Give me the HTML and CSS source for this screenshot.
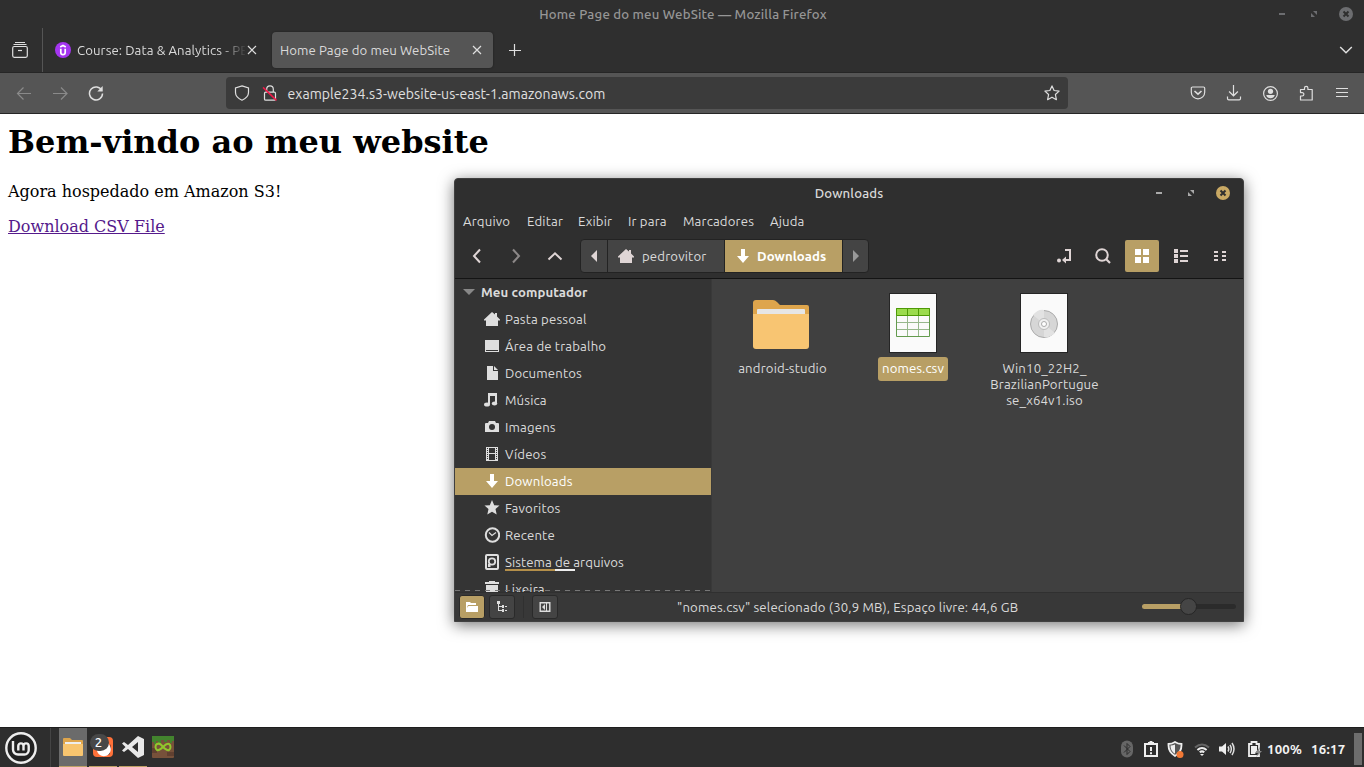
FILE: index.html
```html
<!DOCTYPE html>
<html lang="pt-BR">
<head>
<meta charset="utf-8">
<title>Home Page do meu WebSite — Mozilla Firefox</title>
<link rel="stylesheet" href="styles.css">
</head>
<body>
<header class="browser">
  <div class="titlebar">
    <span class="titlebar-text">Home Page do meu WebSite — Mozilla Firefox</span>
    <div class="window-controls">
      <svg width="16" height="16"><path d="M5 7h6v2H5z"/></svg>
      <svg width="16" height="16"><path d="M7 5h4v4zM5 7v4h4z"/></svg>
      <svg width="16" height="16"><circle cx="8" cy="8" r="7"/><path class="cross" d="M5.5 5.5l5 5m0-5l-5 5"/></svg>
    </div>
  </div>
  <div class="tabs">
    <div class="firefox-view">
      <svg class="line" width="18" height="18"><path d="M4 1.500h10M2.500 3.500h13"/><rect x="1.700" y="5.500" width="14.600" height="10.800" rx="1.500"/><path d="M7 9.500h4"/></svg>
    </div>
    <div class="tab first-tab">
      <svg width="16" height="16"><circle cx="8" cy="8" r="8" fill="#a435f0"/><path d="M5.800 6.800v3.600a2.200 2.200 0 0 0 4.400 0V6.800M5.200 5L8 3.500 10.800 5" fill="none" stroke="#fff" stroke-width="1.700"/></svg>
      <span class="tab-label fade">Course: Data &amp; Analytics - PE</span>
      <svg class="line" width="10" height="10"><path d="M1 1l8 8m0-8L1 9"/></svg>
    </div>
    <div class="tab active">
      <span class="tab-label">Home Page do meu WebSite</span>
      <svg class="line" width="10" height="10"><path d="M1 1l8 8m0-8L1 9"/></svg>
    </div>
    <svg class="line new-tab" width="12" height="12"><path d="M5.500 0v12M0 6.500h12"/></svg>
    <svg class="line all-tabs" width="14" height="9"><path d="M1.200 1L7 6.700 12.800 1"/></svg>
  </div>
  <div class="toolbar">
    <svg class="line dim back" width="16" height="14"><path d="M15 7.500H1.500M7.500 1.500l-6 6 6 6"/></svg>
    <svg class="line dim forward" width="16" height="14"><path d="M0 7.500h14M8 1.500l6 6-6 6"/></svg>
    <svg class="line reload" width="16" height="16"><path d="M13.800 5.500A6.500 6.500 0 1 0 14.500 8.500"/><path d="M14.700 1v5.400H9.300z" fill="#dfdfdf" stroke="none"/></svg>
    <div class="urlbar">
      <svg class="line" width="16" height="16"><path d="M8 .900L14.500 3v4.500c0 3-2.200 5.700-6.500 7.700-4.300-2-6.500-4.700-6.500-7.700V3z"/></svg>
      <svg class="line lock" width="16" height="16"><rect x="2.500" y="7.200" width="11" height="8" rx="1.300"/><path d="M4.700 7V4.200a3.300 3.300 0 0 1 6.600 0V7"/><path d="M1 2.400l13.500 13" stroke="#f01848" stroke-width="1.500"/></svg>
      <span class="url">example234.s3-website-us-east-1.amazonaws.com</span>
      <svg class="line star" width="16" height="16"><path d="M8 .900l2.100 4.600 5 .600-3.700 3.400 1 5.200L8 12.200l-4.400 2.500 1-5.200L.900 6.100l5-.600z" stroke-linejoin="round"/></svg>
    </div>
    <div class="tools">
      <svg class="line" width="16" height="16"><path d="M2.500 2h11q1.200 0 1.200 1.200v4a6.700 6.700 0 0 1-13.400 0v-4Q1.300 2 2.500 2z"/><path d="M4.500 6L8 9.200 11.500 6" stroke-width="1.600"/></svg>
      <svg class="line" width="16" height="16"><path d="M7.500 0v11M3.100 6.500l4.400 4.300 4.400-4.300M1.500 11.500v2q0 1.300 1.300 1.300h10.400q1.300 0 1.300-1.300v-2"/></svg>
      <svg class="line" width="16" height="16"><circle cx="8.500" cy="8.500" r="6.900"/><circle cx="8.500" cy="6.300" r="2.600" fill="#dfdfdf" stroke="none"/><path d="M4.200 10h8.600q-1 3.300-4.300 3.300T4.200 10z" fill="#dfdfdf" stroke="none"/></svg>
      <svg class="line" width="16" height="16"><path d="M2.500 15V11h1.700a1.600 1.600 0 0 0 0-3.400H2.500V4.500h4V3a1.700 1.700 0 0 1 3.400 0v1.500h4.300V15z" stroke-linejoin="round"/></svg>
      <svg class="line" width="16" height="16"><path d="M2 3.500h12M2 7.500h12M2 11.500h12"/></svg>
    </div>
  </div>
</header>

<main class="page">
  <h1>Bem-vindo ao meu website</h1>
  <p>Agora hospedado em Amazon S3!</p>
  <a href="#">Download CSV File</a>
</main>

<footer class="taskbar">
  <svg class="mint" width="34" height="34" viewBox="0 0 34 34"><circle cx="17" cy="17" r="14.700" fill="#222" stroke="#eee" stroke-width="2.400"/><path d="M9 10v8.500a5 5 0 0 0 5 5h6.500a4.200 4.200 0 0 0 4.200-4.200V15a2.600 2.600 0 0 0-5.200 0v4.600V15a2.600 2.600 0 0 0-5.200 0v4.600" fill="none" stroke="#eee" stroke-width="2.400"/></svg>
  <div class="task-list">
    <div class="task focused">
      <svg width="22" height="22"><path d="M1 3q0-1 1-1h6l2 2h10q1 0 1 1v3H1z" fill="#dea54c"/><path d="M3 6h16v4H3z" fill="#eee"/><path d="M1 8h20v11q0 1-1 1H2q-1 0-1-1z" fill="#f8c56f"/></svg>
    </div>
    <div class="task running">
      <svg width="22" height="22"><rect x="1" y="1" width="20" height="20" rx="4" fill="#ff7139"/><path d="M7 14a6 6 0 0 0 11-6v10a7 7 0 0 1-11-4z" fill="#522"/><path d="M7 12q5 3 8-5a7 7 0 1 1-10 8z" fill="#fff"/></svg>
      <span class="badge">2</span>
    </div>
    <div class="task running">
      <svg width="24" height="24"><path d="M17 1l6 3v16l-6 3L7 14l-4 3-2-1.500L4.500 12 1 8.500 3 7l4 3zM17 7l-6 5 6 5z" fill="#e8e8e8" fill-rule="evenodd"/></svg>
    </div>
    <div class="task">
      <svg width="22" height="22"><rect width="22" height="22" rx="1" fill="#77513a"/><path d="M0 12h5v5H0zM15 16h7v4h-7z" fill="#614030"/><path d="M0 0h22v5h-2v2h-2V4h-3v2h-3V4H9v3H6V5H4v3H2V6H0z" fill="#43842e"/><path d="M11 11c-2-3-4-4-6-3s-2 5 0 6 4-1 6-3 4-4 6-3 2 5 0 6-4-1-6-3z" fill="none" stroke="#91c72d" stroke-width="2"/></svg>
    </div>
  </div>
  <div class="tray">
    <svg width="12" height="18"><rect width="12" height="17" y=".5" rx="6" fill="#666"/><path d="M3 5.500l6 6-3 3v-11l3 3-6 6" fill="none" stroke="#2d2d2d"/></svg>
    <svg class="tray-notes" width="14" height="16"><path d="M1 3h12v12H1z" fill="none" stroke="#eee" stroke-width="2"/><path d="M4 1h1.500a1.500 1.500 0 0 1 3 0H10v3H4zM6 6h2v4H6zM6 11.200h2v2H6z" fill="#eee"/></svg>
    <svg class="tray-shield" width="17" height="17"><path d="M8 1q3 2 6.500 2 .5 8-6.500 12Q1 11 1.500 3 5 3 8 1z" fill="#555" stroke="#eee" stroke-width="1.800"/><path d="M8 3.500v9.300Q3.300 10 3.500 4.500 6 4.300 8 3.500z" fill="#eee"/><circle cx="13" cy="13.500" r="3.500" fill="#f27835"/></svg>
    <svg class="tray-wifi" width="16" height="13"><path d="M1 4.500q7-6 14 0" fill="none" stroke="#666" stroke-width="2"/><path d="M3.400 7q4.600-4 9.200 0M5.700 9.300Q8 7.500 10.300 9.300" fill="none" stroke="#eee" stroke-width="2"/><path d="M6 11h4l-2 2z" fill="#eee"/></svg>
    <svg class="tray-sound" width="16" height="14"><path d="M0 4.500h3L7 1v12L3 9.500H0z" fill="#eee"/><path d="M9 4.500q1.500 2.500 0 5M11 2.800q2.700 4.200 0 8.400M13 1q4 6 0 12" fill="none" stroke="#ddd" stroke-width="1.500"/></svg>
    <svg class="tray-battery" width="15" height="16"><path d="M1 3h2.500V1h5v2H11v12H1z" fill="none" stroke="#eee" stroke-width="1.800"/><path d="M3 5h6v5l-2 3H3z" fill="#eee"/><path d="M12 6l-5 6h3l-2 4 6-6h-3z" fill="#888"/></svg>
    <span class="percent">100%</span>
    <span class="clock">16:17</span>
    <i class="show-desktop"></i>
  </div>
</footer>

<section class="files">
  <div class="files-title">
    <span>Downloads</span>
    <div class="window-controls gold">
      <svg width="16" height="16"><path d="M5 7h6v2H5z"/></svg>
      <svg width="16" height="16"><path d="M7 5h4v4zM5 7v4h4z"/></svg>
      <svg width="16" height="16"><circle cx="8" cy="8" r="7"/><path class="cross" d="M5.500 5.500l5 5m0-5l-5 5"/></svg>
    </div>
  </div>
  <nav class="menu">
    <span class="m1">Arquivo</span><span class="m2">Editar</span><span class="m3">Exibir</span><span class="m4">Ir para</span><span class="m5">Marcadores</span><span class="m6">Ajuda</span>
  </nav>
  <div class="files-toolbar">
    <div class="nav-arrows">
      <svg width="16" height="16"><path d="M11 1.500L5 8l6 6.500"/></svg>
      <svg class="off" width="16" height="16"><path d="M5 1.500L11 8l-6 6.500"/></svg>
      <svg width="16" height="16"><path d="M1.500 11.500L8 5.300 14.500 11.500"/></svg>
    </div>
    <div class="path">
      <span class="seg edge"><svg width="8" height="12"><path d="M7 0v12L1 6z"/></svg></span>
      <span class="seg home"><svg width="16" height="15"><path d="M8 0l3 2.600V1h2v3.400L16 7.500v1h-2V14H2V8.500H0v-1z"/></svg>pedrovitor</span>
      <span class="seg current"><svg width="12" height="14"><path d="M4 0h4v7h4l-6 7-6-7h4z"/></svg>Downloads</span>
      <span class="seg edge last"><svg width="8" height="12"><path d="M1 0v12l6-6z"/></svg></span>
    </div>
    <div class="view-tools">
      <svg width="16" height="16"><path d="M9 2h5v10H8" fill="none" stroke="#dfd5d5" stroke-width="2"/><path d="M6 12l4-3.500v7z"/><circle cx="3" cy="12.500" r="2"/></svg>
      <svg width="16" height="16"><circle cx="7" cy="7" r="5.800" fill="none" stroke="#dfd5d5" stroke-width="2"/><path d="M11 11l4 4" stroke="#dfd5d5" stroke-width="2.200"/></svg>
      <span class="view-active"><svg width="14" height="14"><path d="M0 0h6v6H0zM8 0h6v6H8zM0 8h6v6H0zM8 8h6v6H8z"/></svg></span>
      <svg width="16" height="16"><path d="M1 1h4v4H1zM1 6h4v4H1zM1 11h4v4H1zM7 2h8v2H7zM7 7h8v2H7zM7 12h8v2H7z"/></svg>
      <svg width="16" height="16"><path d="M2 3h4v2H2zM2 7h4v2H2zM2 11h4v2H2zM10 3h4v2h-4zM10 7h4v2h-4zM10 11h4v2h-4z"/></svg>
    </div>
  </div>
  <div class="files-body">
    <aside class="places">
      <div class="place heading"><svg width="12" height="6"><path d="M0 0h12L6 6z"/></svg><b>Meu computador</b></div>
      <div class="place"><svg width="16" height="16"><path d="M8 1l3 2.600V2h2v3.400L16 8.500v1h-2V15H2V9.500H0v-1z"/></svg>Pasta pessoal</div>
      <div class="place"><svg width="16" height="16"><path d="M1 2h14v10H1zM1 13h14v1H1zM1 12h1v1H1zM14 12h1v1h-1z"/></svg>Área de trabalho</div>
      <div class="place"><svg width="16" height="16"><path d="M3 1h6v5h5v9H3zM10 1l4 4h-4z"/></svg>Documentos</div>
      <div class="place"><svg width="16" height="16"><path d="M4 1h9v10h-2V4H6v8H4z"/><ellipse cx="3" cy="12.500" rx="3" ry="2"/><ellipse cx="10.500" cy="11.500" rx="2.700" ry="2"/></svg>Música</div>
      <div class="place"><svg width="16" height="16"><path d="M2 4h2l1-2h6l1 2h2q1 0 1 1v8H1V5q0-1 1-1z"/><circle cx="8" cy="8" r="3" fill="#343434"/></svg>Imagens</div>
      <div class="place"><svg width="16" height="16"><path d="M2 1h12v14H2zM5 2v5h6V2zM5 8v6h6V8zM3 2v1h1V2zM3 4v1h1V4zM3 6v1h1V6zM3 8v1h1V8zM3 10v1h1v-1zM3 12v1h1v-1zM12 2v1h1V2zM12 4v1h1V4zM12 6v1h1V6zM12 8v1h1V8zM12 10v1h1v-1zM12 12v1h1v-1z" fill-rule="evenodd"/></svg>Vídeos</div>
      <div class="place selected"><svg width="16" height="16"><path d="M6 1h4v7h4l-6 7-6-7h4z"/></svg>Downloads</div>
      <div class="place"><svg width="16" height="16"><path d="M8 0l2.200 5.200 5.300.400-4 3.500 1.200 5.400L8 11.800l-4.700 2.700 1.200-5.400-4-3.500 5.300-.400z"/></svg>Favoritos</div>
      <div class="place"><svg width="16" height="16"><circle cx="8.500" cy="8" r="6.700" fill="none" stroke="#dedede" stroke-width="2"/><path d="M5 5.500L8 8.500l4-3" fill="none" stroke="#dedede" stroke-width="1.200"/></svg>Recente</div>
      <div class="place"><svg width="16" height="16"><rect x="2" y="1" width="12" height="14" rx="1" fill="none" stroke="#dedede" stroke-width="2"/><circle cx="8" cy="7.500" r="3.200" fill="none" stroke="#dedede" stroke-width="1.800"/><path d="M4 10h2.500v3H4z"/></svg><span class="disk">Sistema de arquivos</span></div>
      <div class="place"><svg width="16" height="16"><path d="M5 0h6v1h4v2H1V1h4zM2 4h12v11H2z"/></svg>Lixeira</div>
    </aside>
    <div class="grid">
      <div class="item"><div class="thumb"><svg width="58" height="52"><path d="M1 4q0-3 3-3h17q2 0 4 2l3 3h27q2 0 2 2v12H1z" fill="#dea54c"/><path d="M5 11q0-1 1-1h46q1 0 1 1v6H5z" fill="#e6e6e6"/><path d="M1 15h56v32q0 3-3 3H4q-3 0-3-3z" fill="#f8c572"/></svg></div><span>android-studio</span></div>
      <div class="item chosen"><div class="thumb"><svg width="48" height="60"><rect x=".5" y=".5" width="47" height="59" fill="#fafafa" stroke="#252525"/><path d="M7 15h34v8H7z" fill="#9bdb4d"/><path d="M18.500 23v20M29.500 23v20M7 29.500h34M7 36.500h34" stroke="#96b78c" fill="none"/><path d="M7.500 15.500h33v28h-33z" stroke="#639b4d" fill="none"/><path d="M7.500 15.500h33v7h-33zM18.500 15v7M29.500 15v7" stroke="#4e9a06" fill="none"/></svg></div><span>nomes.csv</span></div>
      <div class="item"><div class="thumb"><svg width="48" height="60"><rect x=".5" y=".5" width="47" height="59" fill="#fafafa" stroke="#252525"/><circle cx="24" cy="31" r="13.500" fill="#d6d6d6" stroke="#aaa"/><path d="M24 31L13 22q5-6 11-5zM24 31l11 9q-5 5-11 4z" fill="#e2e2e2"/><circle cx="24" cy="31" r="5.500" fill="#f0f0f0" stroke="#bbb"/><circle cx="24" cy="31" r="2.500" fill="#fff" stroke="#aaa"/></svg></div><span>Win10_22H2_<br>BrazilianPortugue<br>se_x64v1.iso</span></div>
    </div>
  </div>
  <div class="status">
    <span class="sb on"><svg width="14" height="12"><path d="M1 1h4l1 1h5v2H3L1 9zM3.500 5H13v6H1V8z"/></svg></span>
    <span class="sb"><svg width="12" height="12"><path d="M1 0h3v3H3v2h3v1H3v3h3v1H2V3H1zM6 4h2v3H6zM9 5h2v1H9zM6 8h2v3H6zM9 9h2v1H9z"/></svg></span>
    <i class="divider"></i>
    <span class="sb"><svg width="12" height="12"><path d="M1.200 1.700h9.600v8.600H1.200z" fill="none" stroke="#dedede" stroke-width="1.400"/><path d="M6 3v6L3 6zM7 2h1v8H7z"/></svg></span>
    <span class="status-text">"nomes.csv" selecionado (30,9 MB), Espaço livre: 44,6 GB</span>
    <div class="slider"><i class="track"></i><i class="knob"></i></div>
  </div>
</section>
</body>
</html>
```
FILE: styles.css
```css
* { box-sizing: border-box; }
body {
  margin: 0; width: 1364px; height: 767px; overflow: hidden; position: relative;
  display: flex; flex-direction: column; background: #fff; color: #dadada;
  font: 13.2px/16px Ubuntu, "Noto Sans", sans-serif;
}
svg { display: block; flex: none; }
span { white-space: nowrap; }
.line { fill: none; stroke: #dfdfdf; stroke-width: 1.2; }
.dim { stroke: #8a8a8a; }

.browser { flex: none; letter-spacing: .08px; }
.titlebar { height: 28px; background: #2f2f2f; position: relative; display: flex; align-items: center; justify-content: center; padding-left: 2px; }
.titlebar-text { color: #969696; font-weight: 500; letter-spacing: .2px; }
.window-controls { position: absolute; right: 10px; top: 6px; display: flex; gap: 16px; fill: #6c6d70; }
.window-controls .cross { stroke: #2f2f2f; stroke-width: 2; }
.tabs { height: 45px; background: #2f2f2f; border-bottom: 1px solid #262626; display: flex; align-items: center; }
.firefox-view { width: 43px; height: 44px; border-right: 1px solid #555; padding: 13px 0 0 11px; }
.tab { height: 36px; display: flex; align-items: center; border-radius: 4px; }
.first-tab { width: 229px; padding-left: 12px; }
.first-tab .tab-label { width: 168px; margin: 0 2px 0 6px; overflow: hidden; }
.fade { -webkit-mask-image: linear-gradient(to right, #000 142px, transparent 170px); mask-image: linear-gradient(to right, #000 142px, transparent 170px); }
.active { width: 221px; background: #555; padding: 0 11px 0 8px; justify-content: space-between; box-shadow: 0 0 2px #1c1c1c; }
.new-tab { margin-left: 16px; }
.all-tabs { margin: 0 11px 0 auto; stroke-width: 1.5; }
.toolbar { height: 41px; background: #555; border-bottom: 1px solid #262626; display: flex; align-items: center; padding-left: 16px; }
.forward { margin-left: 21px; }
.reload { margin-left: 19px; stroke-width: 1.5; }
.urlbar { width: 842px; height: 32px; margin-left: 122px; border-radius: 4px; background: #3b3b3b; display: flex; align-items: center; padding: 0 8px; }
.lock { margin-left: 12px; }
.url { margin-left: 9.5px; padding-top: 1px; font-size: 14px; letter-spacing: .06px; color: #e0e0e0; }
.star { margin-left: auto; }
.tools { display: flex; gap: 20px; margin-left: 122px; }

.page { flex: 1; padding: 10px 8px 0; color: #000; font: 16px/19px "DejaVu Serif", serif; }
.page h1 { margin: 0 0 21px; font-size: 32px; line-height: 37px; font-weight: bold; }
.page p { margin: 0 0 16px; }
.page a { color: #551a8b; }

.taskbar { flex: none; height: 40px; background: #2e2e2e; border-top: 1px solid #1e1e1e; display: flex; }
.mint { margin: 3px 12px 0 4px; }
.task-list { display: flex; gap: 2px; border-left: 1px solid #444; padding-left: 8px; }
.task { width: 28px; height: 39px; display: flex; align-items: center; justify-content: center; position: relative; padding-bottom: 1px; }
.focused { background: #6b6b6b; border-bottom: 1px solid #bda165; }
.running { border-bottom: 1px solid #bda165; }
.badge { position: absolute; left: 1px; top: 6px; width: 19px; height: 17px; border-radius: 9px; background: #484848; color: #fff; text-align: center; font-weight: 500; padding-right: 2px; }
.tray { margin-left: auto; display: flex; align-items: center; font-weight: bold; color: #f2f2f2; padding: 3px 2px 0 0; }
.tray-notes { margin-left: 11px; }
.tray-shield { margin-left: 9px; }
.tray-wifi { margin-left: 10px; }
.tray-sound { margin-left: 9px; }
.tray-battery { margin-left: 13px; }
.percent { width: 37px; margin-left: 4px; letter-spacing: .2px; }
.clock { width: 36px; margin-left: 7px; letter-spacing: .3px; }
.show-desktop { width: 8px; height: 32px; margin-left: 7px; background: #6d6d6d; }

.files { position: absolute; left: 454px; top: 178px; width: 790px; height: 444px; border: 1px solid #404040; border-radius: 4px 4px 0 0; background: #2f2f2f; box-shadow: 0 3px 15px rgba(0,0,0,.55); display: flex; flex-direction: column; letter-spacing: .15px; }
.files-title { height: 29px; display: flex; align-items: center; justify-content: center; position: relative; font-weight: 500; padding-bottom: 2px; }
.gold { right: 12px; fill: #aaa; }
.gold circle { fill: #c9a964; }
.menu { height: 27px; padding: 0 0 2px 8px; display: flex; align-items: center; }
.m1 { width: 64px; } .m2 { width: 51px; } .m3 { width: 50px; } .m4 { width: 55px; } .m5 { width: 87px; }
.files-toolbar { height: 44px; border-bottom: 1px solid #141414; display: flex; align-items: center; padding: 0 15px 1px 14px; }
.nav-arrows { display: flex; gap: 23px; fill: none; stroke: #dfd5d5; stroke-width: 2; }
.off { stroke: #8c8888; }
.path { height: 34px; margin-left: 17px; border: 1px solid #232323; border-radius: 4px; background: #444; display: flex; overflow: hidden; fill: #dfd5d5; }
.seg { display: flex; align-items: center; border-right: 1px solid #232323; }
.edge { width: 27px; justify-content: center; }
.home { width: 117px; padding-left: 10px; gap: 8px; }
.current { width: 118px; padding-left: 12px; gap: 8px; background: #b89f65; color: #fff; font-weight: bold; fill: #fff; letter-spacing: .08px; }
.last { width: 25px; border: 0; fill: #999; }
.view-tools { margin-left: auto; display: flex; align-items: center; fill: #dfd5d5; gap: 23px; }
.view-active { width: 34px; height: 32px; margin: 0 -9px; border-radius: 2px; background: #b89f65; fill: #fff; display: grid; place-items: center; }
.files-body { height: 313px; display: flex; overflow: hidden; }
.places { width: 257px; background: #343434; border-right: 1px solid #393939; overflow: hidden; position: relative; fill: #dedede; }
.places::after { content: ""; position: absolute; left: 0; bottom: 1px; width: 256px; height: 1px; background: repeating-linear-gradient(to right, #777 0 5px, transparent 5px 10px); }
.place { height: 27px; display: flex; align-items: center; gap: 5px; padding: 0 0 1px 29px; }
.heading { padding-left: 8px; gap: 6px; fill: #888; letter-spacing: .1px; }
.selected { background: #b89f65; fill: #fff; color: #fff; }
.disk { position: relative; letter-spacing: .07px; }
.disk::after { content: ""; position: absolute; left: 0; bottom: -1px; width: 70px; height: 2px; background: linear-gradient(to right, #b48f4a 50px, #eee 50px); }
.grid { flex: 1; background: #404040; display: flex; align-items: flex-start; padding: 14px 0 0 4px; }
.item { width: 131px; display: flex; flex-direction: column; align-items: center; text-align: center; }
.thumb { height: 60px; display: flex; align-items: center; margin-bottom: 4px; }
.item:first-child .thumb svg { margin: 3px 1px 0 0; }
.item > span { padding: 3px 4px 5px; border-radius: 3px; position: relative; left: 1px; }
.chosen > span { background: #b89f65; color: #fff; left: .5px; letter-spacing: .08px; }
.status { height: 29px; flex: none; background: #383838; border-top: 1px solid #303030; display: flex; align-items: center; padding: 0 7px 0 4px; }
.sb { width: 26px; height: 24px; border: 1px solid #2a2a2a; border-radius: 3px; background: #444; display: grid; place-items: center; fill: #dedede; margin-right: 4px; }
.on { background: #b89f65; fill: #fff; }
.divider { width: 1px; height: 22px; background: #303030; margin: 0 8px 0 4px; }
.status-text { margin-left: 115px; }
.slider { width: 94px; height: 17px; margin: 0 0 1px auto; position: relative; display: flex; align-items: center; }
.track { width: 94px; height: 5px; border-radius: 3px; background: linear-gradient(to right, #b89f65 40px, #2b2b2b 40px); }
.knob { position: absolute; left: 38px; width: 17px; height: 17px; border: 1px solid #262626; border-radius: 50%; background: #454545; }
```
